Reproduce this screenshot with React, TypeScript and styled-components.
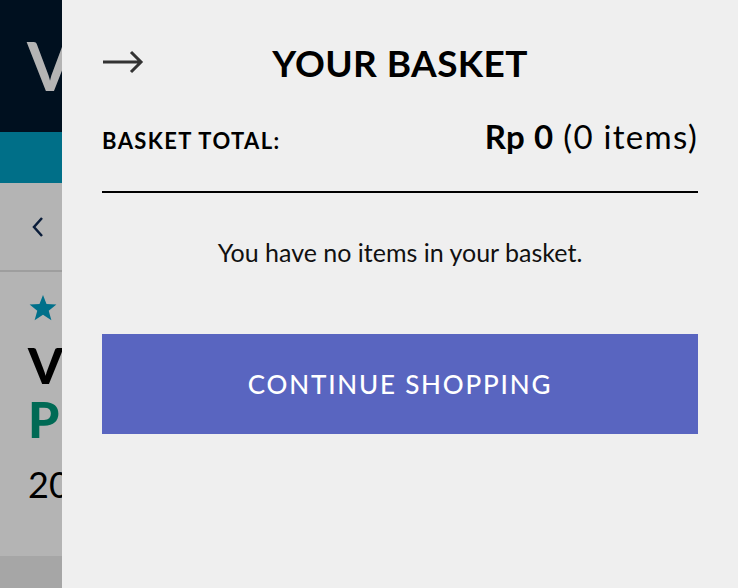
import React from 'react'
import styled, { createGlobalStyle } from 'styled-components'

const GlobalStyle = createGlobalStyle`
  html, body {
    margin: 0;
    padding: 0;
    width: 100%;
    height: 100%;
    overflow: hidden;
  }
  body {
    font-family: 'Lato', 'Noto Sans', sans-serif;
  }
  #root {
    height: 100%;
  }
`

const Page = styled.div`
  position: relative;
  width: 100%;
  height: 100%;
  display: flex;
  flex-direction: column;
  background: #b4b4b4;
  overflow: hidden;
`

const Header = styled.header`
  height: 132px;
  flex-shrink: 0;
  background: #00101f;
  display: flex;
  align-items: center;
  padding-left: 27px;
`

const Logo = styled.span`
  font-family: 'Lato', sans-serif;
  font-weight: 700;
  font-size: 66px;
  color: #b4b4b4;
  line-height: 1;
`

const NavBand = styled.div`
  height: 51px;
  flex-shrink: 0;
  background: #006f88;
`

const Crumbs = styled.div`
  height: 89px;
  flex-shrink: 0;
  display: flex;
  align-items: center;
  padding-left: 30px;
  border-bottom: 2px solid #9e9e9e;
  box-sizing: border-box;
`

const Product = styled.section`
  display: flex;
  flex-direction: column;
  padding: 22px 0 0 28px;
`

const ProductName = styled.div<{ $color: string }>`
  font-family: 'Lato', sans-serif;
  font-weight: 900;
  font-size: 50px;
  line-height: 54px;
  color: ${p => p.$color};
`

const ProductPrice = styled.div`
  font-family: 'Lato', sans-serif;
  font-size: 36px;
  line-height: 1;
  color: #000;
  margin-top: 20px;
`

const Footer = styled.div`
  margin-top: auto;
  height: 32px;
  background: #a6a6a6;
`

const Drawer = styled.aside`
  position: absolute;
  top: 0;
  right: 0;
  bottom: 0;
  width: 676px;
  background: #efefef;
  padding: 0 40px;
  box-sizing: border-box;
  display: flex;
  flex-direction: column;
`

const DrawerHead = styled.div`
  height: 110px;
  flex-shrink: 0;
  display: grid;
  grid-template-columns: 1fr auto 1fr;
  align-items: center;
  padding-top: 14px;
  box-sizing: border-box;
`

const CloseButton = styled.button`
  background: none;
  border: 0;
  padding: 0;
  justify-self: start;
  display: flex;
  cursor: pointer;
`

const Title = styled.h1`
  margin: 0;
  font-family: 'Lato', sans-serif;
  font-weight: 700;
  font-size: 37px;
  line-height: 1;
  letter-spacing: 0.4px;
  color: #000;
`

const TotalRow = styled.div`
  flex-shrink: 0;
  display: flex;
  justify-content: space-between;
  align-items: baseline;
  padding-top: 10px;
  height: 83px;
  box-sizing: border-box;
  border-bottom: 2px solid #000;
`

const TotalLabel = styled.span`
  font-family: 'Lato', sans-serif;
  font-weight: 700;
  font-size: 22px;
  letter-spacing: 1.4px;
  line-height: 1;
  color: #000;
`

const TotalValue = styled.span`
  font-family: 'Lato', sans-serif;
  font-size: 33px;
  line-height: 1;
  letter-spacing: 1.3px;
  color: #000;
`

const Strong = styled.strong`
  font-weight: 700;
  letter-spacing: 0.5px;
`

const Empty = styled.p`
  margin: 44px 0 0;
  text-align: center;
  font-family: 'Lato', sans-serif;
  font-size: 25px;
  line-height: 30px;
  color: #111;
`

const ContinueButton = styled.button`
  flex-shrink: 0;
  margin-top: 67px;
  height: 100px;
  width: 100%;
  border: 0;
  background: #5965c0;
  color: #fff;
  font-family: 'Lato', sans-serif;
  font-size: 26px;
  font-weight: 500;
  letter-spacing: 1.8px;
  cursor: pointer;
`

const Chevron = () => (
  <svg width="16" height="24" viewBox="0 0 16 24">
    <path d="M12 3 L4 12 L12 21" fill="none" stroke="#0a1d3a" strokeWidth="2.5" />
  </svg>
)

const Star = () => (
  <svg width="30" height="28" viewBox="0 0 24 23">
    <path d="M12 0.8 L14.9 8.3 L23 8.6 L16.7 13.7 L18.9 21.6 L12 17.1 L5.1 21.6 L7.3 13.7 L1 8.6 L9.1 8.3 Z" fill="#00708a" />
  </svg>
)

const Arrow = () => (
  <svg width="42" height="28" viewBox="0 0 42 28">
    <path d="M1 14 H39 M29 4 L39 14 L29 24" fill="none" stroke="#333" strokeWidth="3" />
  </svg>
)

export default function App() {
  return (
    <>
      <GlobalStyle />
      <Page>
        <Header>
          <Logo>V</Logo>
        </Header>
        <NavBand />
        <Crumbs>
          <Chevron />
        </Crumbs>
        <Product>
          <Star />
          <ProductName $color="#000" style={{ marginTop: 16 }}>V</ProductName>
          <ProductName $color="#006a55">P</ProductName>
          <ProductPrice>20</ProductPrice>
        </Product>
        <Footer />

        <Drawer>
          <DrawerHead>
            <CloseButton aria-label="Close basket">
              <Arrow />
            </CloseButton>
            <Title>YOUR BASKET</Title>
            <span />
          </DrawerHead>
          <TotalRow>
            <TotalLabel>BASKET TOTAL:</TotalLabel>
            <TotalValue>
              <Strong>Rp 0</Strong> (0 items)
            </TotalValue>
          </TotalRow>
          <Empty>You have no items in your basket.</Empty>
          <ContinueButton>CONTINUE SHOPPING</ContinueButton>
        </Drawer>
      </Page>
    </>
  )
}
